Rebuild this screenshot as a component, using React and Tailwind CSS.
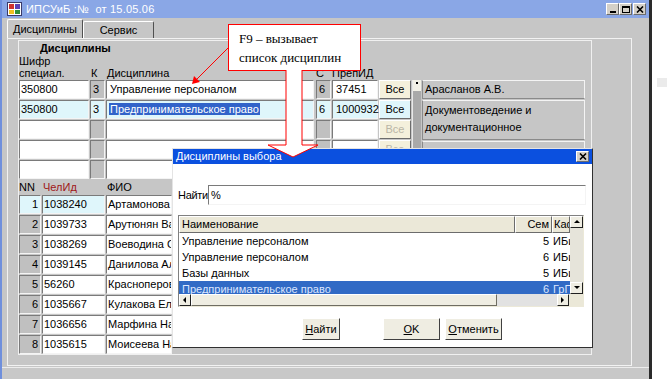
import React from "react";

const sunk = "border border-t-[#7a7a7a] border-l-[#7a7a7a] border-b-[#f4f4f4] border-r-[#f4f4f4]";
const raised = "border border-t-white border-l-white border-b-[#6c6c6c] border-r-[#6c6c6c]";
const xpBtn = "border border-t-white border-l-white border-b-[#6f6d62] border-r-[#6f6d62] bg-[#efede2]";

const discRows = [
  { code: "350800", k: "3", name: "Управление персоналом", s: "6", prep: "37451", on: true },
  { code: "350800", k: "3", name: "Предпринимательское право", s: "6", prep: "1000932", on: true, current: true },
  {},
  {},
  {},
];

const people = [
  ["1", "1038240", "Артамонова Ирина"],
  ["2", "1039733", "Арутюнян Валерий"],
  ["3", "1038269", "Воеводина Светлана"],
  ["4", "1039145", "Данилова Алла"],
  ["5", "56260", "Красноперова Ольга"],
  ["6", "1035667", "Кулакова Елена"],
  ["7", "1036656", "Марфина Наталья"],
  ["8", "1035615", "Моисеева Надежда"],
];

const picks = [
  ["Управление персоналом", "5", "ИБиУ"],
  ["Управление персоналом", "6", "ИБиУ"],
  ["Базы данных", "5", "ИБиУ"],
  ["Предпринимательское право", "6", "ГрПр"],
];

function Tri({ dir }) {
  const pts = {
    up: "1,5 4,2 7,5",
    down: "1,2 4,5 7,2",
    left: "5,1 2,4 5,7",
    right: "2,1 5,4 2,7",
  }[dir];
  return (
    <svg width="8" height="8" viewBox="0 0 8 8">
      <polygon points={pts} fill="#000" />
    </svg>
  );
}

function DiscRow({ row }) {
  const cur = row.current;
  const white = cur ? "bg-[#dff6fb]" : "bg-white";
  const grey = cur ? "bg-[#dff6fb]" : "bg-[#c0c0c0]";
  const btnBg = cur ? "bg-[#dff6fb]" : "bg-[#f4f0dc]";
  return (
    <div className="flex h-[19px] leading-[17px]">
      <div className={`w-[70px] ${sunk} ${white} pl-[1px]`}>{row.code}</div>
      <div className={`ml-[1px] w-[15px] ${sunk} ${grey} pl-[2px]`}>{row.k}</div>
      <div className={`ml-[1px] w-[208px] overflow-hidden whitespace-nowrap ${sunk} ${white} pl-[2px]`}>
        {cur ? <span className="bg-[#3163c9] px-[1px] text-white">{row.name}</span> : <span className="pl-[1px]">{row.name}</span>}
      </div>
      <div className={`ml-[2px] w-[15px] ${sunk} ${grey} pl-[2px]`}>{row.s}</div>
      <div className={`ml-[1px] w-[46px] ${sunk} ${white} pl-[3px]`}>{row.prep}</div>
      <div className={`ml-[1px] w-[32px] ${raised} ${btnBg} text-center ${row.on ? "text-black" : "text-[#b9b5a6]"}`}>
        Все
      </div>
    </div>
  );
}

function PersonRow({ p, first }) {
  return (
    <div className="flex h-[19px] leading-[17px]">
      <div className={`w-[22px] ${sunk} ${first ? "bg-[#dff6fb]" : "bg-[#c0c0c0]"} pr-[2px] text-right`}>{p[0]}</div>
      <div className={`ml-[1px] w-[63px] ${sunk} ${first ? "bg-[#dff6fb]" : "bg-white"} pl-[1px]`}>{p[1]}</div>
      <div className={`ml-[1px] w-[66px] overflow-hidden whitespace-nowrap ${sunk} bg-white pl-[1px]`}>{p[2]}</div>
    </div>
  );
}

function TitleButtons() {
  const box = `flex h-[12px] w-[13px] items-center justify-center ${raised} bg-[#d4d0c8]`;
  return (
    <div className="ml-auto mr-[3px] flex">
      <div className={box}>
        <div className="mt-[5px] h-[2px] w-[6px] bg-black" />
      </div>
      <div className={box}>
        <div className="h-[7px] w-[8px] border border-t-2 border-black" />
      </div>
      <div className={`ml-[1px] ${box}`}>
        <svg width="8" height="7" viewBox="0 0 8 7">
          <path d="M1 0.5 L7 6.5 M7 0.5 L1 6.5" stroke="#000" strokeWidth="1.6" />
        </svg>
      </div>
    </div>
  );
}

function PickDialog() {
  return (
    <div className="absolute left-[172px] top-[148px] flex h-[200px] w-[421px] flex-col border border-t-[#e4e4e4] border-l-[#e4e4e4] border-b-[#303030] border-r-[#303030] bg-white">
      <div className="relative flex h-[15px] items-center bg-[#0b50df] pl-[3px] leading-[15px] text-white">
        Дисциплины выбора
        <div className={`absolute right-[3px] top-[2px] flex h-[11px] w-[13px] items-center justify-center ${raised} bg-[#d4d0c8]`}>
          <svg width="8" height="7" viewBox="0 0 8 7">
            <path d="M1 0.5 L7 6.5 M7 0.5 L1 6.5" stroke="#000" strokeWidth="1.6" />
          </svg>
        </div>
      </div>

      <div className="mt-[21px] mr-[6px] flex h-[20px] items-center pl-[5px]">
        <span className="tracking-[-0.3px]">Найти</span>
        <div className={`h-full flex-1 ${sunk} bg-white pl-[2px] leading-[18px]`}>%</div>
      </div>

      <div className="ml-[5px] mt-[10px] flex h-[92px] w-[406px] flex-col border border-t-[#808080] border-l-[#808080] border-b-[#ece9d8] border-r-[#ece9d8]">
        <div className="flex min-h-0 flex-1">
          <div className="flex w-[391px] flex-col overflow-hidden">
            <div className="flex h-[17px] shrink-0 bg-[#ebe8d8] leading-[15px]">
              <div className={`w-[336px] ${raised} pl-[2px]`}>Наименование</div>
              <div className={`w-[37px] ${raised} pr-[2px] text-right`}>Сем</div>
              <div className={`w-[18px] overflow-hidden whitespace-nowrap ${raised} pl-[1px]`}>Кафедра</div>
            </div>
            {picks.map((r, i) => {
              const sel = i === picks.length - 1;
              return (
                <div
                  key={i}
                  className={`flex h-[16px] shrink-0 leading-[16px] ${sel ? "bg-[#316ac5] text-[#dce6ff]" : ""}`}
                >
                  <div className="w-[336px] pl-[3px]">{r[0]}</div>
                  <div className="w-[37px] pr-[3px] text-right">{r[1]}</div>
                  <div className="w-[18px] overflow-hidden whitespace-nowrap pl-[1px]">{r[2]}</div>
                </div>
              );
            })}
          </div>
          <div className="flex w-[13px] flex-col bg-[#ebe8d8]">
            <div className={`flex h-[12px] items-center justify-center ${xpBtn} border-b-[#202020] border-r-[#202020]`}>
              <Tri dir="up" />
            </div>
            <div className="flex-1 bg-[#e6e4da]" />
            <div className={`flex h-[12px] items-center justify-center ${xpBtn} border-b-[#202020] border-r-[#202020]`}>
              <Tri dir="down" />
            </div>
          </div>
        </div>
        <div className="flex h-[12px]">
          <div className={`flex w-[12px] items-center justify-center ${xpBtn} border-b-[#202020] border-r-[#202020]`}>
            <Tri dir="left" />
          </div>
          <div className={`w-[306px] ${xpBtn}`} />
          <div className="w-[60px] bg-[#e2e2e2]" />
          <div className={`flex w-[12px] items-center justify-center ${xpBtn} border-b-[#202020] border-r-[#202020]`}>
            <Tri dir="right" />
          </div>
          <div className="flex-1 bg-[#ebe8d8]" />
        </div>
      </div>

      <div className="mt-[11px] flex h-[22px] pl-[129px] leading-[20px]">
        <div className={`w-[38px] ${xpBtn} border-b-[#404040] border-r-[#404040] text-center`}>
          <span className="underline">Н</span>айти
        </div>
        <div className={`ml-[43px] w-[57px] ${xpBtn} border-b-[#404040] border-r-[#404040] text-center`}>
          <span className="underline">O</span>K
        </div>
        <div className={`ml-[5px] w-[57px] ${xpBtn} border-b-[#404040] border-r-[#404040] text-center`}>
          <span className="underline">О</span>тменить
        </div>
      </div>
    </div>
  );
}

export default function App() {
  return (
    <div className="relative flex h-[379px] w-[667px] overflow-hidden bg-white font-['Liberation_Sans',Arial,sans-serif] text-[11px] text-black">
      <div className="flex h-full w-[652px] shrink-0 flex-col border-l-2 border-r-[3px] border-l-[#6f8fdc] border-r-[#2a2a2a] bg-[#c6c6c6]">
        {/* title bar */}
        <div className="flex h-[18px] shrink-0 items-center bg-[#8aa7e6] pl-[5px] text-white">
          <svg width="15" height="14" viewBox="0 0 15 14">
            <rect x="0.5" y="0.5" width="14" height="13" fill="#fff" stroke="#3a3a6a" />
            <rect x="2" y="2" width="5" height="5" fill="#d0312d" />
            <rect x="8" y="2" width="5" height="5" fill="#5b3fb5" />
            <rect x="2" y="8" width="5" height="4" fill="#f0c020" />
            <rect x="8" y="8" width="5" height="4" fill="#2f8f3a" />
          </svg>
          <span className="ml-[4px] tracking-[0.2px]">ИПСУиБ :№ &nbsp;от 15.05.06</span>
          <TitleButtons />
        </div>

        {/* tabs */}
        <div className="flex h-[20px] shrink-0 items-end pl-[5px]">
          <div className="flex h-[19px] w-[76px] items-center justify-center rounded-t-[2px] border-l border-t border-r border-l-white border-t-white border-r-[#505050]">
            Дисциплины
          </div>
          <div className="flex h-[17px] w-[71px] items-center justify-center rounded-t-[2px] border-l border-t border-r border-l-white border-t-white border-r-[#505050]">
            Сервис
          </div>
        </div>

        {/* tab panel */}
        <div className="ml-[5px] flex h-[328px] w-[625px] shrink-0 flex-col border border-[#f2f2f2]">
          <div className="ml-[10px] mt-[1px] flex w-[574px] flex-col border border-[#f0f0f0]">
            <div className="h-[14px] pl-[21px] font-bold leading-[15px]">Дисциплины</div>
            <div className="h-[13px] leading-[13px]">Шифр</div>
            <div className="flex h-[12px] leading-[11px]">
              <div className="w-[71px]">специал.</div>
              <div className="w-[16px] pl-[1px]">К</div>
              <div className="w-[210px] pl-[1px]">Дисциплина</div>
              <div className="w-[16px]">С</div>
              <div className="w-[80px]">ПрепИД</div>
            </div>

            <div className="flex">
              <div className="flex flex-col gap-[1px]">
                {discRows.map((r, i) => (
                  <DiscRow key={i} row={r} />
                ))}
              </div>
              <div className="ml-[1px] flex h-[99px] w-[9px] flex-col border-l border-[#e8e8e8] bg-[#a9a9a9]">
                <div className="flex h-[11px] justify-center bg-[#f2f0e6] pt-[2px]">
                  <div className="h-[2px] w-[2px] bg-black" />
                </div>
              </div>
              <div className="ml-[1px] flex w-[163px] flex-col gap-[1px]">
                <div className="h-[19px] border border-t-[#f4f4f4] border-r-[#f4f4f4] border-l-[#8a8a8a] border-b-[#8a8a8a] pl-[2px] leading-[17px]">
                  Арасланов А.В.
                </div>
                <div className="h-[40px] border border-t-[#f4f4f4] border-r-[#f4f4f4] border-l-[#8a8a8a] border-b-[#8a8a8a] pl-[2px] pt-[1px] leading-[17px]">
                  Документоведение и
                  <br />
                  документационное
                </div>
                <div className="h-[37px] border border-t-[#f4f4f4] border-r-[#f4f4f4] border-l-[#8a8a8a] border-b-[#8a8a8a]" />
              </div>
            </div>

            <div className="flex h-[16px] items-start pt-[2px] leading-[12px]">
              <div className="w-[24px]">NN</div>
              <div className="w-[64px] text-[#a01818]">ЧелИд</div>
              <div>ФИО</div>
            </div>
            <div className="flex flex-col gap-[1px]">
              {people.map((p, i) => (
                <PersonRow key={i} p={p} first={i === 0} />
              ))}
            </div>
          </div>
        </div>

        <div className="mt-[1px] flex-1 border-t border-[#ececec] bg-[#c8c8c8]" />
      </div>

      <div className="flex-1">
        <div className="ml-[5px] mt-[78px] h-[9px] bg-[#ebebeb]" />
      </div>

      <PickDialog />

      {/* callout */}
      <div className="absolute left-[228px] top-[24px] h-[47px] w-[133px] border border-[#ff0000] bg-white pl-[10px] pt-[4px] font-['Liberation_Serif','Times_New_Roman',serif] text-[13px] leading-[19px]">
        F9 – вызывает
        <br />
        список дисциплин
      </div>
      <svg className="pointer-events-none absolute left-0 top-0" width="667" height="379">
        <line x1="229" y1="47" x2="197" y2="79" stroke="#ff0000" strokeWidth="1" />
        <polygon points="192,84 194,76 200,82" fill="#ff0000" />
        <polygon points="286,69 286,145 268,145 293,157 318,145 302,145 302,69" fill="#fff" />
        <polyline
          points="286,70 286,145 268,145 293,157 318,145 302,145 302,70"
          fill="none"
          stroke="#ff0000"
          strokeWidth="1"
        />
      </svg>
    </div>
  );
}
